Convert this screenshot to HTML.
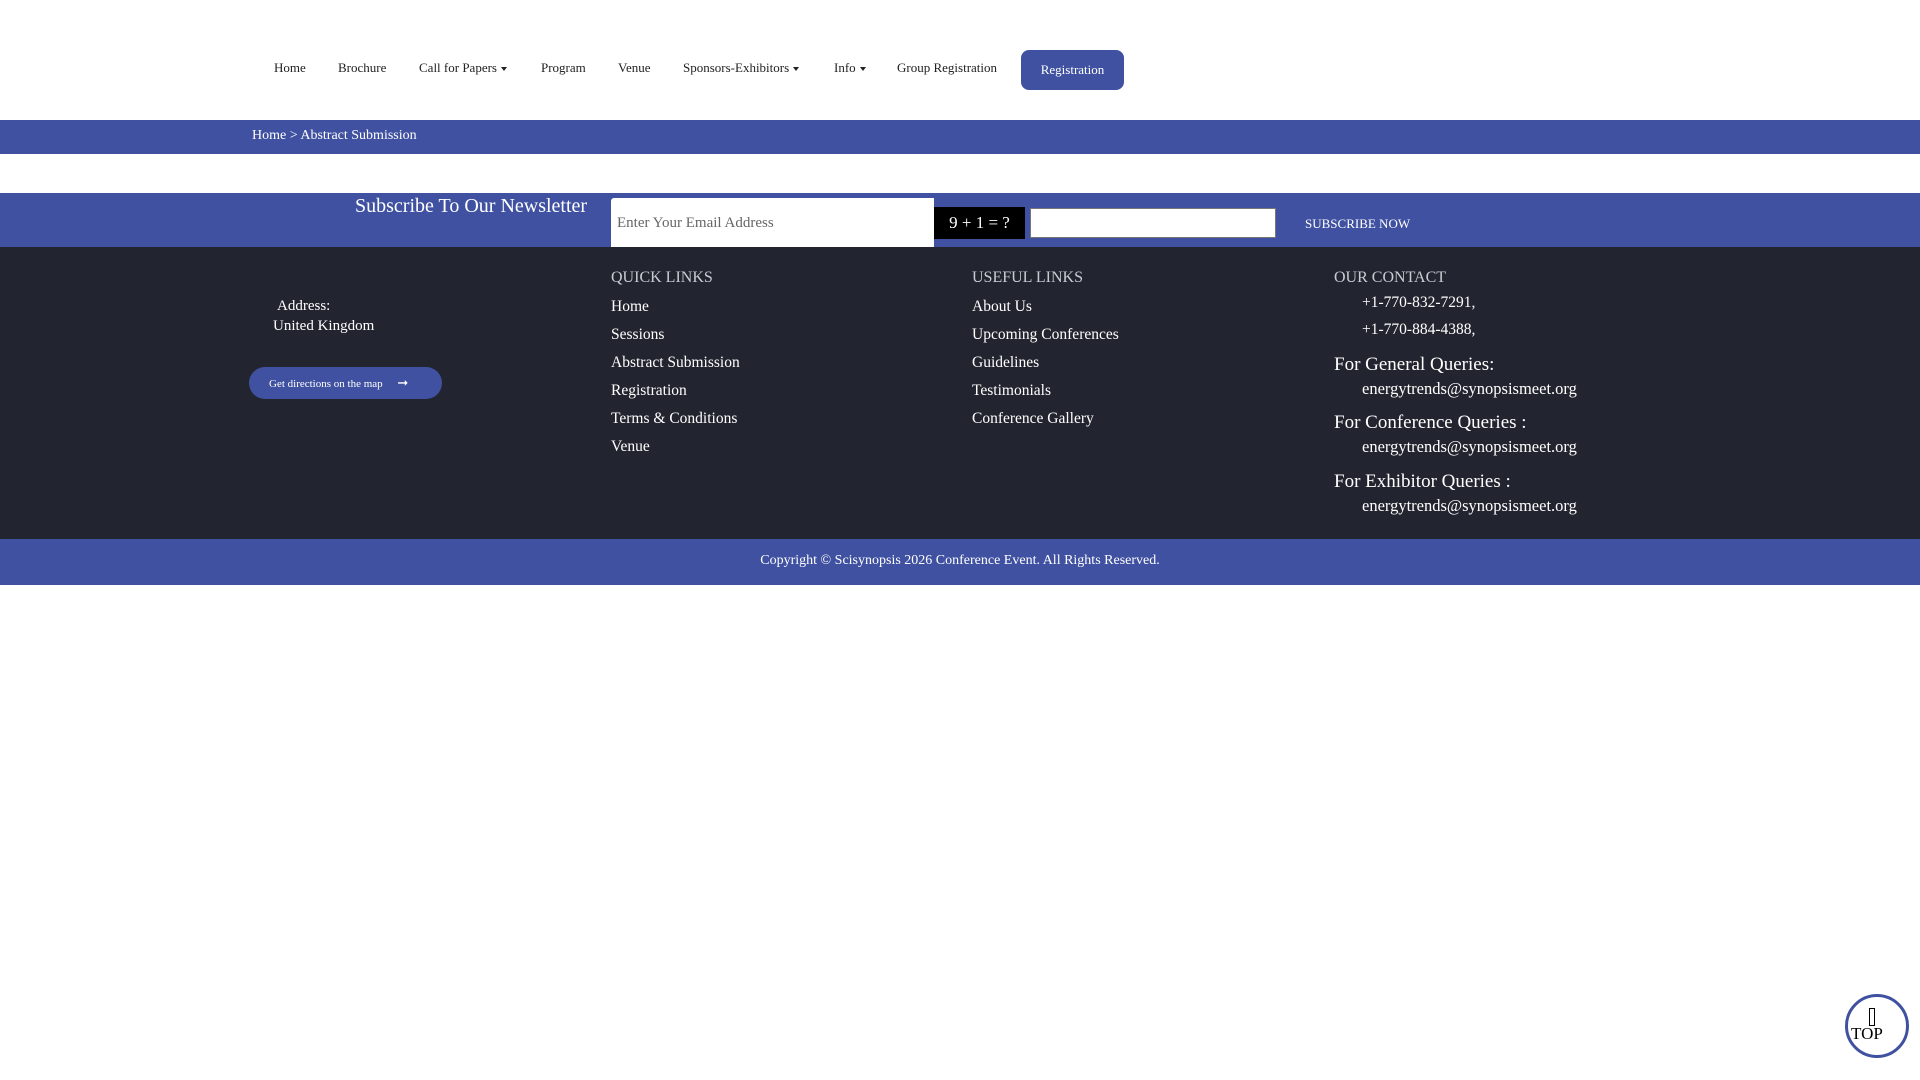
<!DOCTYPE html>
<html><head><meta charset="utf-8"><style>
*{margin:0;padding:0;box-sizing:border-box}
body{width:1920px;height:1080px;background:#fff;font-family:"Liberation Serif",serif;position:relative;overflow:hidden}
.a{position:absolute;white-space:nowrap}
.nav{font-size:13px;color:#222;top:60px}
.blue{background:#3f51a0}
.dk{background:#22252f}
.w{color:#fff}
.car{display:inline-block;border-left:3px solid transparent;border-right:3px solid transparent;border-top:4px solid #222;vertical-align:middle;margin-left:4px}
.lk{font-size:15.5px;color:#fff}
.em{font-size:16.5px;color:#fff}
.hd{font-size:16px;color:#c9ccd3}
.q{font-size:19px;color:#fff}
</style></head><body>
<div class="a nav" style="left:274px">Home</div>
<div class="a nav" style="left:338px">Brochure</div>
<div class="a nav" style="left:419px">Call for Papers<span class="car"></span></div>
<div class="a nav" style="left:541px">Program</div>
<div class="a nav" style="left:618px">Venue</div>
<div class="a nav" style="left:683px">Sponsors-Exhibitors<span class="car"></span></div>
<div class="a nav" style="left:834px">Info<span class="car"></span></div>
<div class="a nav" style="left:897px">Group Registration</div>
<div class="a blue w" style="left:1021px;top:50px;width:103px;height:40px;border-radius:8px;font-size:13px;text-align:center;line-height:40px">Registration</div>

<div class="a blue" style="left:0;top:120px;width:1920px;height:34px"></div>
<div class="a w" style="left:252px;top:128px;font-size:14px">Home &gt; Abstract Submission</div>

<div class="a blue" style="left:0;top:193px;width:1920px;height:55px"></div>
<div class="a w" style="left:355px;top:195px;font-size:20px">Subscribe To Our Newsletter</div>
<div class="a" style="left:611px;top:198px;width:323px;height:50px;background:#fff;border-radius:3px 0 0 0"></div>
<div class="a" style="left:617px;top:215px;font-size:15px;color:#666">Enter Your Email Address</div>
<div class="a w" style="left:934px;top:207px;width:91px;height:32px;background:#000;font-size:17px;text-align:center;line-height:32px">9 + 1 = ?</div>
<div class="a" style="left:1030px;top:208px;width:246px;height:30px;background:#fff;border:1px solid #777"></div>
<div class="a w" style="left:1305px;top:216px;font-size:13px">SUBSCRIBE NOW</div>

<div class="a dk" style="left:0;top:247px;width:1920px;height:292px"></div>
<div class="a w" style="left:277px;top:298px;font-size:15px">Address:</div>
<div class="a w" style="left:273px;top:318px;font-size:15px">United Kingdom</div>
<div class="a blue w" style="left:249px;top:367px;width:193px;height:32px;border-radius:16px;font-size:11px;line-height:32px;padding-left:20px">Get directions on the map <span style="margin-left:12px;font-size:13px">&#10142;</span></div>

<div class="a hd" style="left:611px;top:269px">QUICK LINKS</div>
<div class="a lk" style="left:611px;top:298px">Home</div>
<div class="a lk" style="left:611px;top:326px">Sessions</div>
<div class="a lk" style="left:611px;top:354px">Abstract Submission</div>
<div class="a lk" style="left:611px;top:382px">Registration</div>
<div class="a lk" style="left:611px;top:410px">Terms &amp; Conditions</div>
<div class="a lk" style="left:611px;top:438px">Venue</div>

<div class="a hd" style="left:972px;top:269px">USEFUL LINKS</div>
<div class="a lk" style="left:972px;top:298px">About Us</div>
<div class="a lk" style="left:972px;top:326px">Upcoming Conferences</div>
<div class="a lk" style="left:972px;top:354px">Guidelines</div>
<div class="a lk" style="left:972px;top:382px">Testimonials</div>
<div class="a lk" style="left:972px;top:410px">Conference Gallery</div>

<div class="a hd" style="left:1334px;top:269px">OUR CONTACT</div>
<div class="a lk" style="left:1362px;top:294px">+1-770-832-7291,</div>
<div class="a lk" style="left:1362px;top:321px">+1-770-884-4388,</div>
<div class="a q" style="left:1334px;top:354px">For General Queries:</div>
<div class="a em" style="left:1362px;top:379px">energytrends@synopsismeet.org</div>
<div class="a q" style="left:1334px;top:412px">For Conference Queries :</div>
<div class="a em" style="left:1362px;top:437px">energytrends@synopsismeet.org</div>
<div class="a q" style="left:1334px;top:471px">For Exhibitor Queries :</div>
<div class="a em" style="left:1362px;top:496px">energytrends@synopsismeet.org</div>

<div class="a blue" style="left:0;top:539px;width:1920px;height:46px"></div>
<div class="a w" style="left:0;width:1920px;text-align:center;top:553px;font-size:14px">Copyright © Scisynopsis 2026 Conference Event. All Rights Reserved.</div>

<div class="a" style="left:1845px;top:994px;width:64px;height:64px;border:3px solid #3f51a0;border-radius:50%;background:#fff"></div>
<div class="a" style="left:1869px;top:1008px;width:6px;height:18px;border:1px solid #000"></div>
<div class="a" style="left:1851px;top:1024px;font-size:17px;color:#000">TOP</div>
</body></html>
